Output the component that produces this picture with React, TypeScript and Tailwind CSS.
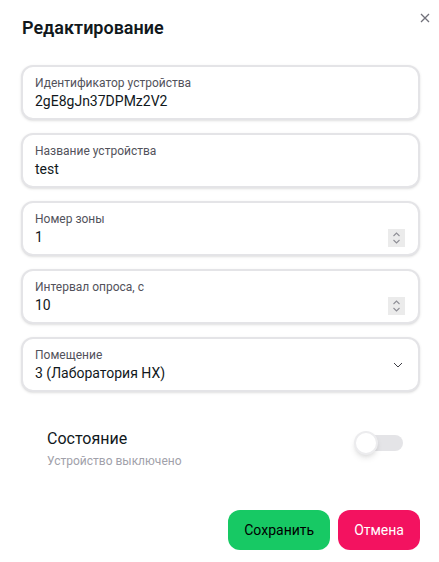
import React, { useState } from 'react';

type FieldProps = {
  label: string;
  value: string;
  kind?: 'text' | 'number' | 'select';
};

const FONT = { fontFamily: 'Roboto, "Noto Sans", sans-serif' };

function Spinner() {
  return (
    <div className="flex h-[18px] w-[17px] items-center justify-center bg-[#ebebeb]">
      <svg width="9" height="14" viewBox="0 0 9 14" fill="none" stroke="#8f8f96" strokeWidth={1.1}>
        <path d="M1.5 5 L4.5 2 L7.5 5" />
        <path d="M1.5 9 L4.5 12 L7.5 9" />
      </svg>
    </div>
  );
}

function Field({ label, value, kind = 'text' }: FieldProps) {
  return (
    <div className="flex h-[55px] items-center rounded-xl border-2 border-[#e4e4e7] bg-white px-3 shadow-sm">
      <div className="flex min-w-0 flex-1 flex-col pt-px">
        <span className="text-[12px] leading-4 text-[#52525b]">{label}</span>
        <span className="text-[14px] leading-5 text-[#11181c]">{value}</span>
      </div>
      {kind === 'number' && (
        <div className="mt-[19px] mr-[1px]">
          <Spinner />
        </div>
      )}
      {kind === 'select' && (
        <svg className="mr-[3px]" width="10" height="6" viewBox="0 0 10 6" fill="none" stroke="#3f3f46" strokeWidth={1}>
          <path d="M1 1 L5 5 L9 1" />
        </svg>
      )}
    </div>
  );
}

export default function App() {
  const [enabled, setEnabled] = useState(false);

  return (
    <div className="relative h-[562px] w-full overflow-hidden bg-white" style={FONT}>
      {/* close */}
      <button className="absolute right-[9px] top-[12px] flex h-[11px] w-[11px] items-center justify-center text-[#71717a]">
        <svg width="10" height="10" viewBox="0 0 10 10" fill="none" stroke="currentColor" strokeWidth={1.3}>
          <path d="M1 1 L9 9 M9 1 L1 9" />
        </svg>
      </button>

      <div className="px-[22px] pt-[14px]">
        <h2 className="text-[18px] font-semibold leading-7 text-[#11181c]">Редактирование</h2>
      </div>

      <div className="mt-[23px] flex flex-col gap-[13px] pl-[21px] pr-[19px]">
        <Field label="Идентификатор устройства" value="2gE8gJn37DPMz2V2" />
        <Field label="Название устройства" value="test" />
        <Field label="Номер зоны" value="1" kind="number" />
        <Field label="Интервал опроса, с" value="10" kind="number" />
        <Field label="Помещение" value="3 (Лаборатория НХ)" kind="select" />
      </div>

      {/* state switch */}
      <div className="mt-[35px] flex items-center justify-between pl-[47px] pr-[36px]">
        <div className="flex flex-col">
          <span className="text-[16px] leading-6 text-[#11181c]">Состояние</span>
          <span className="mt-[2px] text-[12px] leading-4 text-[#a1a1aa]">Устройство выключено</span>
        </div>
        <button
          onClick={() => setEnabled(!enabled)}
          className="relative mb-[10px] h-4 w-12 rounded-full bg-[#e4e4e7]"
        >
          <span
            className={`absolute top-1/2 h-6 w-6 -translate-y-1/2 rounded-full border-2 border-[#ececee] bg-white shadow-md ${
              enabled ? 'left-6' : '-left-px'
            }`}
          />
        </button>
      </div>

      <div className="mt-[41px] flex justify-end gap-2 pr-[19px]">
        <button className="h-10 min-w-20 rounded-xl bg-[#17c964] px-4 text-[14px] text-black">Сохранить</button>
        <button className="h-10 min-w-20 rounded-xl bg-[#f31260] px-4 text-[14px] text-white">Отмена</button>
      </div>
    </div>
  );
}
